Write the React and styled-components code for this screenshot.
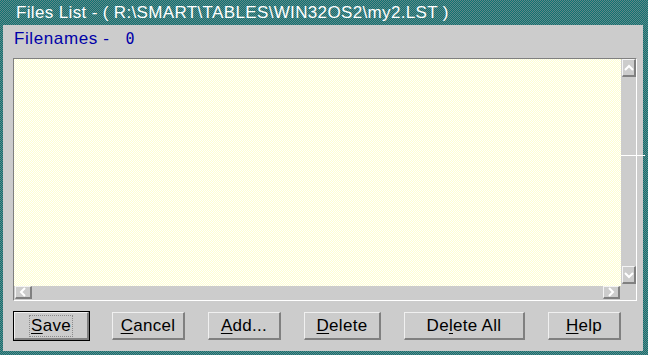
import React from 'react';
import styled, { createGlobalStyle } from 'styled-components';

const dither = (a, b) => `repeating-conic-gradient(${a} 0 25%, ${b} 0 50%) 0 0 / 2px 2px`;

const Global = createGlobalStyle`
  html, body { margin: 0; padding: 0; background: #cccccc; }
  body { font-family: "Liberation Sans", Arial, sans-serif; }
`;

/* window frame */
const Frame = styled.div`
  position: relative;
  width: 648px;
  height: 355px;
  box-sizing: border-box;
  padding: 0 5px 4px 3px;
  background: ${dither('#0f7272', '#5f8888')};
  display: flex;
  flex-direction: column;
`;

const TitleBar = styled.div`
  height: 25px;
  margin: 0 -5px 0 -3px;
  padding-left: 16px;
  color: #ffffff;
  font-size: 17px;
  letter-spacing: 0.35px;
  line-height: 26px;
  white-space: nowrap;
`;

const Client = styled.div`
  flex: 1;
  background: #cccccc;
  padding: 4px 0 0 10px;
  display: flex;
  flex-direction: column;
`;

const Label = styled.div`
  color: #0000a8;
  font-size: 17px;
  letter-spacing: 0.6px;
  line-height: 20px;
  padding-left: 1px;
  white-space: pre;
`;

const Count = styled.span`
  font-family: "DejaVu Sans Mono", "Liberation Mono", monospace;
  font-size: 15px;
`;

/* list box */
const ListBox = styled.div`
  margin-top: 9px;
  width: 624px;
  height: 243px;
  box-sizing: border-box;
  border-top: 1px solid #808080;
  border-left: 1px solid #808080;
  border-right: 1px solid #ffffff;
  border-bottom: 1px solid #ffffff;
  display: grid;
  grid-template-columns: 1fr 15px;
  grid-template-rows: 1fr 14px;
`;

const ListArea = styled.div`
  background: ${dither('#ffffff', '#ffffd0')};
`;

const VScroll = styled.div`
  background: #cccccc;
  display: flex;
  flex-direction: column;
  justify-content: space-between;
  padding: 0 0 2px 1px;
`;

const HScroll = styled.div`
  background: #cccccc;
  display: flex;
  justify-content: space-between;
  padding: 0 1px 1px 1px;
`;

const Corner = styled.div`
  background: #cccccc;
`;

const ArrowBtn = styled.div`
  width: ${p => p.$w}px;
  height: ${p => p.$h}px;
  box-sizing: border-box;
  background: #cccccc;
  border-top: 1px solid #f4f4f4;
  border-left: 1px solid #f4f4f4;
  border-right: 2px solid #808080;
  border-bottom: 2px solid #808080;
  display: flex;
  align-items: center;
  justify-content: center;
  svg { flex-shrink: 0; display: block; }
`;

/* buttons */
const ButtonRow = styled.div`
  margin-top: 11px;
  padding-left: 1px;
  display: flex;
  gap: 23px;
`;

const Button = styled.div`
  width: ${p => p.$w}px;
  height: 28px;
  box-sizing: border-box;
  background: #cccccc;
  border-top: 1px solid #f0f0f0;
  border-left: 1px solid #f0f0f0;
  border-right: 2px solid #808080;
  border-bottom: 2px solid #808080;
  outline: ${p => (p.$default ? '1px solid #000000' : 'none')};
  display: flex;
  align-items: center;
  justify-content: center;
  font-size: 17px;
  letter-spacing: 0.3px;
  color: #000000;
  u { text-underline-offset: 2px; }
`;

const Focus = styled.span`
  border: 1px dotted #8a8a8a;
  padding: 1px 1px;
  line-height: 18px;
`;

const Glitch = styled.div`
  position: absolute;
  left: 621px;
  top: 155px;
  width: 24px;
  height: 1px;
  background: #ffffff;
`;

const Chevron = ({ dir }) => {
  const pts = {
    up: '1,7 5,3 9,7',
    down: '1,3 5,7 9,3',
    left: '7,1 3,5 7,9',
    right: '3,1 7,5 3,9',
  }[dir];
  return (
    <svg width="10" height="10" viewBox="0 0 10 10">
      <polyline points={pts} fill="none" stroke="#ffffff" strokeWidth="2" />
    </svg>
  );
};

const buttons = [
  { w: 75, pre: '', u: 'S', rest: 'ave', def: true },
  { w: 73, pre: '', u: 'C', rest: 'ancel' },
  { w: 73, pre: '', u: 'A', rest: 'dd...' },
  { w: 77, pre: '', u: 'D', rest: 'elete' },
  { w: 121, pre: 'De', u: 'l', rest: 'ete All' },
  { w: 73, pre: '', u: 'H', rest: 'elp' },
];

export default function App() {
  return (
    <>
      <Global />
      <Frame>
        <TitleBar>Files List - ( R:\SMART\TABLES\WIN32OS2\my2.LST )</TitleBar>
        <Client>
          <Label>Filenames -   <Count>0</Count></Label>
          <ListBox>
            <ListArea />
            <VScroll>
              <ArrowBtn $w={14} $h={18}><Chevron dir="up" /></ArrowBtn>
              <ArrowBtn $w={14} $h={18}><Chevron dir="down" /></ArrowBtn>
            </VScroll>
            <HScroll>
              <ArrowBtn $w={17} $h={13}><Chevron dir="left" /></ArrowBtn>
              <ArrowBtn $w={17} $h={13}><Chevron dir="right" /></ArrowBtn>
            </HScroll>
            <Corner />
          </ListBox>
          <ButtonRow>
            {buttons.map(b => {
              const text = <>{b.pre}<u>{b.u}</u>{b.rest}</>;
              return (
                <Button key={b.rest} $w={b.w} $default={b.def}>
                  {b.def ? <Focus>{text}</Focus> : text}
                </Button>
              );
            })}
          </ButtonRow>
        </Client>
        <Glitch />
      </Frame>
    </>
  );
}
